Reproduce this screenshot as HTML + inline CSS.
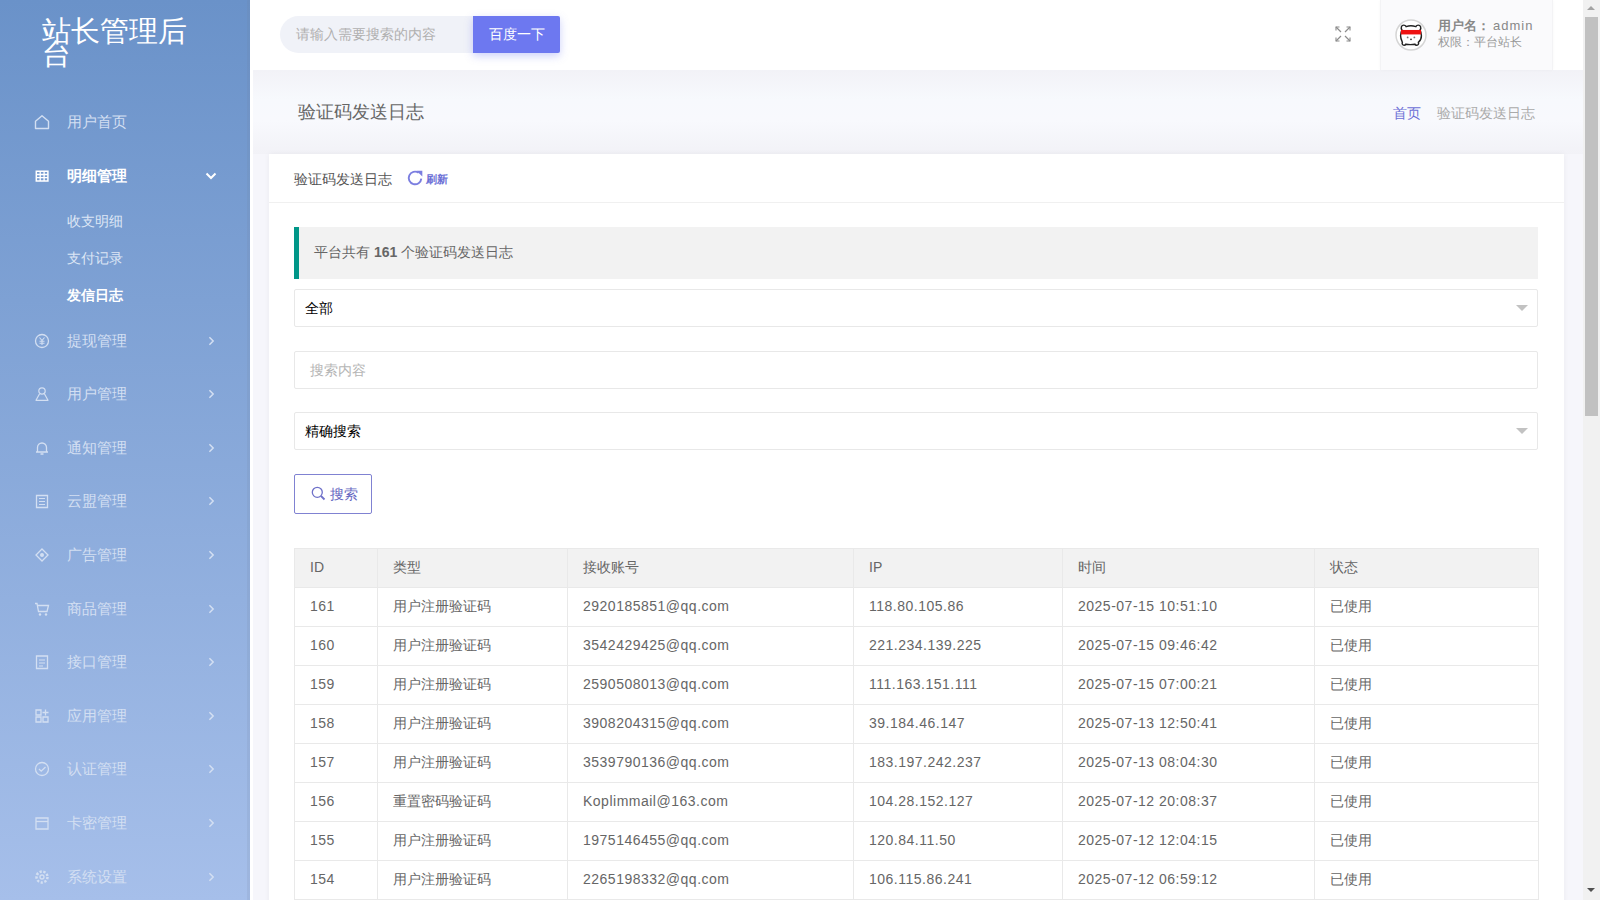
<!DOCTYPE html>
<html><head><meta charset="utf-8">
<style>
*{box-sizing:border-box;margin:0;padding:0}
html,body{width:1600px;height:900px;overflow:hidden;font-family:"Liberation Sans",sans-serif;font-size:14px;color:#666;background:#f6f6fb}
.abs{position:absolute}
#side{position:absolute;left:0;top:0;width:250px;height:900px;background:linear-gradient(to bottom,#6a92c9 0%,#a6bfea 100%);overflow:hidden}
#side .logo{position:absolute;left:42px;top:20px;width:160px;font-size:29px;line-height:23px;font-weight:300;color:#fff;word-break:break-all}
.mi{position:absolute;left:0;width:250px;height:54px;color:#d3dff2;font-size:15px}
.mi .t{position:absolute;left:67px;top:0;line-height:54px}
.mi .ic{position:absolute;left:34px;top:19px;width:16px;height:16px}
.mi .ar{position:absolute;left:207.5px;top:22px;width:7px;height:10px}
.mi.on{color:#fff;font-weight:bold}
.mi .ar.dn{width:12px;height:8px;left:205px;top:23px}
.sub.on{color:#fff;font-weight:bold}
.sub{position:absolute;left:67px;font-size:14px;color:#dde6f5;line-height:20px}
#hdr{position:absolute;left:250px;top:0;width:1333px;height:70px;background:#fff}
#srch{position:absolute;left:280px;top:16px;width:193px;height:37px;background:#f0f2f8;border-radius:19px 0 0 19px;font-size:14px;color:#b0b0b0;line-height:37px;padding-left:16px}
#btn{position:absolute;left:473px;top:16px;width:87px;height:37px;background:#6d78f0;color:#fff;font-size:14px;line-height:37px;text-align:center;box-shadow:0 3px 8px rgba(109,120,240,.35);border-radius:0 2px 2px 0}
#user{position:absolute;left:1380px;top:0;width:173px;height:70px;background:#fafafc;border-left:1px solid #f3f3f5;border-right:1px solid #f3f3f5;box-shadow:0 0 3px rgba(0,0,0,.03)}
#main{position:absolute;left:253px;top:70px;width:1330px;height:830px;background:#f6f6fb;border-top:2px solid #f1f1f6}
#ptitle{position:absolute;left:298px;top:100px;font-size:18px;line-height:24px;color:#666}
#bc1{position:absolute;left:1393px;top:103px;font-size:14px;line-height:20px;color:#6b6fd6}
#bc2{position:absolute;left:1437px;top:103px;font-size:14px;line-height:20px;color:#aaa}
#card{position:absolute;left:269px;top:154px;width:1295px;height:760px;background:#fff;box-shadow:0 0 6px rgba(0,0,0,.05)}
#chd{position:absolute;left:0;top:0;width:100%;height:49px;border-bottom:1px solid #f0f0f0}
#chd .t{position:absolute;left:25px;top:15px;font-size:14px;line-height:20px;color:#555}
#chd .r{position:absolute;left:157px;top:17px;font-size:11px;line-height:16px;color:#6b6fd6;font-weight:bold}
.quote{position:absolute;left:294px;top:227px;width:1244px;height:52px;background:#f2f2f2;border-left:5px solid #009688;padding-left:15px;line-height:50px;color:#666;font-size:14px}
.inp{position:absolute;left:294px;width:1244px;height:38px;border:1px solid #e8e8e8;border-radius:2px;background:#fff;padding-left:10px;line-height:36px;font-size:14px}
.caret{position:absolute;right:9px;top:15px;width:0;height:0;border-left:6px solid transparent;border-right:6px solid transparent;border-top:6px solid #c2c2c2}
#sbtn{position:absolute;left:294px;top:474px;width:78px;height:40px;border:1px solid #8082d2;border-radius:2px;color:#6668c2;font-size:14px;line-height:38px;padding-left:35px}
table{position:absolute;left:294px;top:548px;border-collapse:collapse;table-layout:fixed;width:1244px}
td,th{border:1px solid #e9e9e9;padding:8px 15px 10px;line-height:20px;font-size:14px;color:#666;text-align:left;font-weight:normal;white-space:nowrap}
th{background:#f2f2f2}
td.n{letter-spacing:.5px}
#sb{position:absolute;left:1583px;top:0;width:17px;height:900px;background:#f1f1f1}
#thumb{position:absolute;left:2px;top:17px;width:13px;height:399px;background:#c1c1c1}
</style></head><body>
<div id="side">
  <div style="position:absolute;left:247px;top:0;width:3px;height:900px;background:rgba(110,120,150,.12)"></div><div class="logo">站长管理后台</div>
<div class="mi" style="top:95.0px"><svg class="ic" viewBox="0 0 16 16"><use href="#i-home"/></svg><span class="t">用户首页</span></div>
<div class="mi on" style="top:149.0px"><svg class="ic" viewBox="0 0 16 16"><use href="#i-grid"/></svg><span class="t">明细管理</span><svg class="ar dn" viewBox="0 0 12 8"><path d="M1.5 1.5 6 6l4.5-4.5" fill="none" stroke="#fff" stroke-width="2"/></svg></div>
<div class="sub" style="top:211px">收支明细</div>
<div class="sub" style="top:248px">支付记录</div>
<div class="sub on" style="top:285px">发信日志</div>
<div class="mi" style="top:313.6px"><svg class="ic" viewBox="0 0 16 16"><use href="#i-rmb"/></svg><span class="t">提现管理</span><svg class="ar" viewBox="0 0 8 12"><path d="M1.5 1.5 6 6l-4.5 4.5" fill="none" stroke="currentColor" stroke-width="1.8"/></svg></div>
<div class="mi" style="top:367.2px"><svg class="ic" viewBox="0 0 16 16"><use href="#i-user"/></svg><span class="t">用户管理</span><svg class="ar" viewBox="0 0 8 12"><path d="M1.5 1.5 6 6l-4.5 4.5" fill="none" stroke="currentColor" stroke-width="1.8"/></svg></div>
<div class="mi" style="top:420.8px"><svg class="ic" viewBox="0 0 16 16"><use href="#i-bell"/></svg><span class="t">通知管理</span><svg class="ar" viewBox="0 0 8 12"><path d="M1.5 1.5 6 6l-4.5 4.5" fill="none" stroke="currentColor" stroke-width="1.8"/></svg></div>
<div class="mi" style="top:474.4px"><svg class="ic" viewBox="0 0 16 16"><use href="#i-doc"/></svg><span class="t">云盟管理</span><svg class="ar" viewBox="0 0 8 12"><path d="M1.5 1.5 6 6l-4.5 4.5" fill="none" stroke="currentColor" stroke-width="1.8"/></svg></div>
<div class="mi" style="top:528.0px"><svg class="ic" viewBox="0 0 16 16"><use href="#i-speaker"/></svg><span class="t">广告管理</span><svg class="ar" viewBox="0 0 8 12"><path d="M1.5 1.5 6 6l-4.5 4.5" fill="none" stroke="currentColor" stroke-width="1.8"/></svg></div>
<div class="mi" style="top:581.6px"><svg class="ic" viewBox="0 0 16 16"><use href="#i-cart"/></svg><span class="t">商品管理</span><svg class="ar" viewBox="0 0 8 12"><path d="M1.5 1.5 6 6l-4.5 4.5" fill="none" stroke="currentColor" stroke-width="1.8"/></svg></div>
<div class="mi" style="top:635.2px"><svg class="ic" viewBox="0 0 16 16"><use href="#i-doc2"/></svg><span class="t">接口管理</span><svg class="ar" viewBox="0 0 8 12"><path d="M1.5 1.5 6 6l-4.5 4.5" fill="none" stroke="currentColor" stroke-width="1.8"/></svg></div>
<div class="mi" style="top:688.8px"><svg class="ic" viewBox="0 0 16 16"><use href="#i-app"/></svg><span class="t">应用管理</span><svg class="ar" viewBox="0 0 8 12"><path d="M1.5 1.5 6 6l-4.5 4.5" fill="none" stroke="currentColor" stroke-width="1.8"/></svg></div>
<div class="mi" style="top:742.4px"><svg class="ic" viewBox="0 0 16 16"><use href="#i-shield"/></svg><span class="t">认证管理</span><svg class="ar" viewBox="0 0 8 12"><path d="M1.5 1.5 6 6l-4.5 4.5" fill="none" stroke="currentColor" stroke-width="1.8"/></svg></div>
<div class="mi" style="top:796.0px"><svg class="ic" viewBox="0 0 16 16"><use href="#i-card"/></svg><span class="t">卡密管理</span><svg class="ar" viewBox="0 0 8 12"><path d="M1.5 1.5 6 6l-4.5 4.5" fill="none" stroke="currentColor" stroke-width="1.8"/></svg></div>
<div class="mi" style="top:849.6px"><svg class="ic" viewBox="0 0 16 16"><use href="#i-gear"/></svg><span class="t">系统设置</span><svg class="ar" viewBox="0 0 8 12"><path d="M1.5 1.5 6 6l-4.5 4.5" fill="none" stroke="currentColor" stroke-width="1.8"/></svg></div>
</div>
<svg width="0" height="0" style="position:absolute">
<defs>
<symbol id="i-home" viewBox="0 0 16 16"><path d="M1.5 7.2 8 1.8l6.5 5.4V14.5h-13z" fill="none" stroke="currentColor" stroke-width="1.4" stroke-linejoin="round"/></symbol>
<symbol id="i-grid" viewBox="0 0 16 16"><path d="M2.3 3.3h11.6v9.6H2.3z" fill="none" stroke="currentColor" stroke-width="1.5"/><path d="M2.3 6.5h11.6M2.3 9.7h11.6M6.2 3.3v9.6M10.1 3.3v9.6" stroke="currentColor" stroke-width="1.3"/></symbol>
<symbol id="i-rmb" viewBox="0 0 16 16"><circle cx="8" cy="8" r="6.5" fill="none" stroke="currentColor" stroke-width="1.3"/><path d="M5.5 4.5 8 7.5l2.5-3M8 7.5v4.5M5.5 8.3h5M5.5 10.2h5" fill="none" stroke="currentColor" stroke-width="1.1"/></symbol>
<symbol id="i-user" viewBox="0 0 16 16"><circle cx="8" cy="5" r="3.2" fill="none" stroke="currentColor" stroke-width="1.2"/><path d="M5.6 7.8 2 14.3h12l-3.6-6.5" fill="none" stroke="currentColor" stroke-width="1.2" stroke-linejoin="round"/></symbol>
<symbol id="i-bell" viewBox="0 0 16 16"><path d="M3.5 12V7.5a4.5 4.5 0 0 1 9 0V12zM2 12h12M6.5 14h3" fill="none" stroke="currentColor" stroke-width="1.3"/></symbol>
<symbol id="i-doc" viewBox="0 0 16 16"><path d="M2.5 2.5h11v12h-11z" fill="none" stroke="currentColor" stroke-width="1.3"/><path d="M5 5.5h6M5 8.5h6M5 11.5h6" stroke="currentColor" stroke-width="1.2"/></symbol>
<symbol id="i-speaker" viewBox="0 0 16 16"><path d="M8 2 14 8 8 14 2 8z" fill="none" stroke="currentColor" stroke-width="1.3"/><circle cx="8" cy="8" r="2" fill="currentColor"/></symbol>
<symbol id="i-cart" viewBox="0 0 16 16"><path d="M1 2.5h2l1.5 8h8.5l1.5-6H4" fill="none" stroke="currentColor" stroke-width="1.3"/><circle cx="6" cy="13.5" r="1.2" fill="currentColor"/><circle cx="12" cy="13.5" r="1.2" fill="currentColor"/></symbol>
<symbol id="i-doc2" viewBox="0 0 16 16"><path d="M2.5 2h11v12.5h-11z" fill="none" stroke="currentColor" stroke-width="1.3"/><path d="M5 6h6M5 9h6M5 12h4" stroke="currentColor" stroke-width="1.2"/></symbol>
<symbol id="i-app" viewBox="0 0 16 16"><path d="M2 2h5v5H2zM2 9h5v5H2zM9 9h5v5H9z" fill="none" stroke="currentColor" stroke-width="1.3"/><path d="M11.5 1.5v6M8.5 4.5h6" stroke="currentColor" stroke-width="1.3"/></symbol>
<symbol id="i-shield" viewBox="0 0 16 16"><circle cx="8" cy="8" r="6.5" fill="none" stroke="currentColor" stroke-width="1.3"/><path d="m5 8 2.2 2.2L11.5 6" fill="none" stroke="currentColor" stroke-width="1.3"/></symbol>
<symbol id="i-card" viewBox="0 0 16 16"><path d="M2 3h12v11H2z" fill="none" stroke="currentColor" stroke-width="1.3"/><path d="M2 6.5h12" stroke="currentColor" stroke-width="1.3"/></symbol>
<symbol id="i-gear" viewBox="0 0 16 16"><circle cx="8" cy="8" r="5.5" fill="none" stroke="currentColor" stroke-width="2.5" stroke-dasharray="2.2 1.6"/><circle cx="8" cy="8" r="2" fill="none" stroke="currentColor" stroke-width="1.3"/></symbol>
</defs></svg>
<div id="hdr"></div>
<div id="main"></div><div style="position:absolute;left:253px;top:70px;width:1330px;height:84px;background:linear-gradient(#f2f2f7,#f7f9fd 35%,#f8f9fd 60%,#f2f2f7)"></div><div style="position:absolute;left:250px;top:70px;width:3px;height:830px;background:#fff"></div>
<div id="srch">请输入需要搜索的内容</div>
<div id="btn">百度一下</div>
<svg id="fs" viewBox="0 0 18 18" style="position:absolute;left:1334px;top:25px;width:18px;height:18px"><g fill="none" stroke="#8c8c8c" stroke-width="1.2"><path d="M2 2l5 5M16 2l-5 5M2 16l5-5M16 16l-5-5"/><path d="M2 5.5V2h3.5M12.5 2H16v3.5M2 12.5V16h3.5M12.5 16H16v-3.5" stroke-width="1.1"/></g></svg>
<div id="user">
<svg style="position:absolute;left:14px;top:19px;width:32px;height:32px" viewBox="0 0 32 32">
<circle cx="16" cy="16" r="15" fill="#fff" stroke="#d5d5d5" stroke-width="1.5"/>
<g transform="translate(16 16) scale(1.12) translate(-16 -16.3)"><path d="M8 12c-1.5-2-.5-4.5 1.5-4.5 1 0 1.8.6 2.2 1.3 2.6-1 5.8-1 8.6 0 .4-.7 1.2-1.3 2.2-1.3 2 0 3 2.5 1.5 4.5 1 1.5 1.3 3.2 1.3 5 0 2.5-1 4.5-2.7 5.8.5 1.2 0 2.7-1.5 2.7-.8 0-1.4-.4-1.7-1-1.3.3-2.6.4-3.9.4s-2.7-.1-4-.4c-.3.6-.9 1-1.7 1-1.5 0-2-1.5-1.5-2.7C7.7 21.5 6.7 19.5 6.7 17c0-1.8.3-3.5 1.3-5z" fill="#fff" stroke="#222" stroke-width="1.3"/>
<path d="M7 11.8h18v4H7z" fill="#ee1111"/>
<circle cx="13" cy="18.5" r=".8" fill="#777"/><circle cx="19" cy="18.5" r=".8" fill="#777"/><circle cx="16" cy="20.2" r=".8" fill="#333"/></g>
</svg>
<div style="position:absolute;left:57px;top:17px;font-size:13px;line-height:18px;color:#888;font-weight:bold;white-space:nowrap">用户名：<span style="font-weight:normal;letter-spacing:1px;margin-left:3px">admin</span></div>
<div style="position:absolute;left:57px;top:34px;font-size:12px;line-height:16px;color:#999;white-space:nowrap">权限：平台站长</div>
</div>
<div id="ptitle">验证码发送日志</div>
<div id="bc1">首页</div>
<div id="bc2">验证码发送日志</div>
<div id="card">
  <div id="chd"><div class="t">验证码发送日志</div><svg style="position:absolute;left:138px;top:15.5px;width:16px;height:16px" viewBox="0 0 16 16"><path d="M14.3 8.6A6.3 6.3 0 1 1 11.6 2.8" fill="none" stroke="#7b7ee0" stroke-width="1.9"/><path d="M9.5 .8h5.8v5.6z" fill="#7b7ee0"/></svg><div class="r">刷新</div></div>
</div>
<div class="quote">平台共有 <b>161</b> 个验证码发送日志</div>
<div class="inp" style="top:289px;color:#000">全部<span class="caret"></span></div>
<div class="inp" style="top:351px;color:#b5b5b5;padding-left:15px">搜索内容</div>
<div class="inp" style="top:412px;color:#000">精确搜索<span class="caret"></span></div>
<div id="sbtn"><svg style="position:absolute;left:16px;top:11px;width:15px;height:15px" viewBox="0 0 15 15"><circle cx="6.3" cy="6.3" r="5" fill="none" stroke="#6f71c9" stroke-width="1.3"/><path d="M10 10l3.5 3.5" stroke="#6f71c9" stroke-width="1.8"/></svg>搜索</div>
<table>
<colgroup><col style="width:83px"><col style="width:190px"><col style="width:286px"><col style="width:209px"><col style="width:252px"><col style="width:224px"></colgroup>
<tr><th>ID</th><th>类型</th><th>接收账号</th><th>IP</th><th>时间</th><th>状态</th></tr>
<tr><td class="n">161</td><td>用户注册验证码</td><td class="n">2920185851@qq.com</td><td class="n">118.80.105.86</td><td class="n">2025-07-15 10:51:10</td><td>已使用</td></tr>
<tr><td class="n">160</td><td>用户注册验证码</td><td class="n">3542429425@qq.com</td><td class="n">221.234.139.225</td><td class="n">2025-07-15 09:46:42</td><td>已使用</td></tr>
<tr><td class="n">159</td><td>用户注册验证码</td><td class="n">2590508013@qq.com</td><td class="n">111.163.151.111</td><td class="n">2025-07-15 07:00:21</td><td>已使用</td></tr>
<tr><td class="n">158</td><td>用户注册验证码</td><td class="n">3908204315@qq.com</td><td class="n">39.184.46.147</td><td class="n">2025-07-13 12:50:41</td><td>已使用</td></tr>
<tr><td class="n">157</td><td>用户注册验证码</td><td class="n">3539790136@qq.com</td><td class="n">183.197.242.237</td><td class="n">2025-07-13 08:04:30</td><td>已使用</td></tr>
<tr><td class="n">156</td><td>重置密码验证码</td><td class="n">Koplimmail@163.com</td><td class="n">104.28.152.127</td><td class="n">2025-07-12 20:08:37</td><td>已使用</td></tr>
<tr><td class="n">155</td><td>用户注册验证码</td><td class="n">1975146455@qq.com</td><td class="n">120.84.11.50</td><td class="n">2025-07-12 12:04:15</td><td>已使用</td></tr>
<tr><td class="n">154</td><td>用户注册验证码</td><td class="n">2265198332@qq.com</td><td class="n">106.115.86.241</td><td class="n">2025-07-12 06:59:12</td><td>已使用</td></tr>
</table>
<div id="sb"><div id="thumb"></div><div style="position:absolute;left:4px;top:6px;width:0;height:0;border-left:4.5px solid transparent;border-right:4.5px solid transparent;border-bottom:4.5px solid #a3a3a3"></div><div style="position:absolute;left:4px;top:888px;width:0;height:0;border-left:4.5px solid transparent;border-right:4.5px solid transparent;border-top:4.5px solid #505050"></div></div>
</body></html>
